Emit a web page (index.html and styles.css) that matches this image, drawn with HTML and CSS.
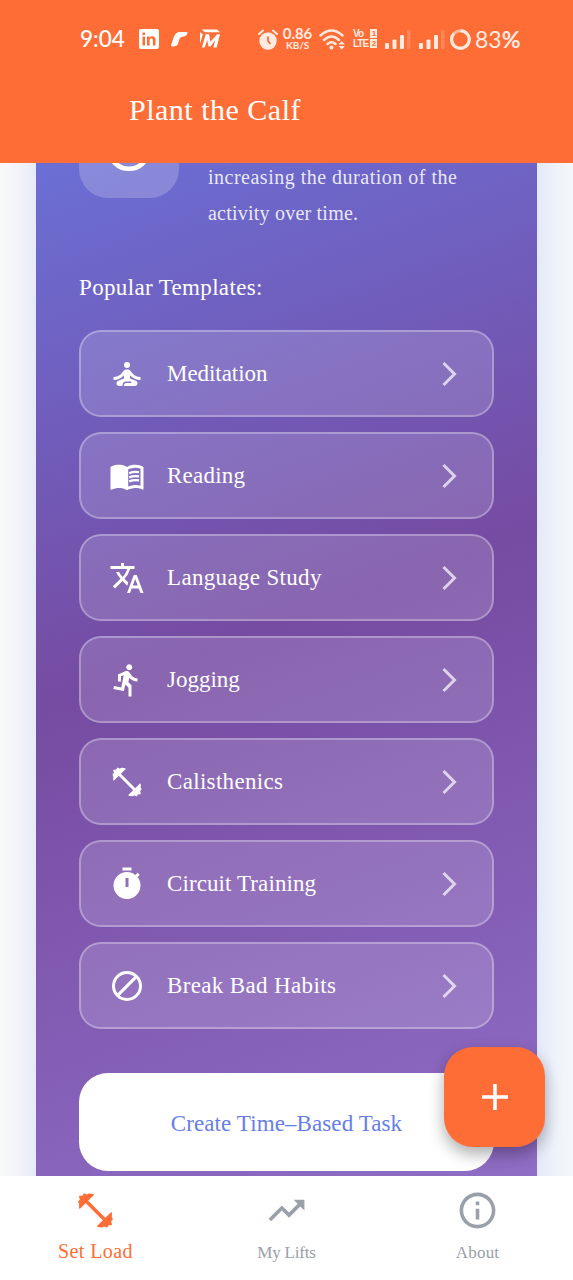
FILE: index.html
```html
<!DOCTYPE html>
<html lang="en">
<head>
<meta charset="utf-8">
<title>Plant the Calf</title>
<link rel="stylesheet" href="styles.css">
</head>
<body>
<div class="app">
  <header class="header">
    <div class="status">
      <span class="clock">9:04</span>
      <svg class="s-linkedin" width="20" height="20" viewBox="0 0 20 20"><path fill="#fff" fill-rule="evenodd" d="M2 0h16a2 2 0 0 1 2 2v16a2 2 0 0 1-2 2H2a2 2 0 0 1-2-2V2a2 2 0 0 1 2-2zm1.500 7.500v9h2.500v-9zm0-4v2.500h2.500v-2.500zm4.500 4v9h2.600v-5c0-2.600 3.300-2.600 3.300 0v5h2.600v-5.700c0-4-4-4.500-5.900-2.200V7.500z"/></svg>
      <svg class="s-wing" width="17" height="16" viewBox="0 0 17 16"><path fill="#fff" d="M0 14.500C2.500 8 3 1 9 1h7.500c0 3-2 4.500-5 4.700-3.500.3-3 3.300-4.500 7.300-1 2-3 2.500-6 2.500z"/></svg>
      <svg class="s-m" width="20" height="20" viewBox="0 0 21 20"><path fill="#fff" d="M0 3v12l3-10zM2 0h16l3 3H5zM6 5l-4 14h3l2.500-8 1.500 7h2l5-7-2 8h3.500L21 5h-3l-7 8-1.500-8z"/></svg>
      <svg class="s-alarm" width="20" height="21" viewBox="0 0 20 21"><circle cx="10" cy="12" r="8.700" fill="#ffeae0"/><path d="M1 5l4-3.500M19 5l-4-3.500" stroke="#ffeae0" stroke-width="2" stroke-linecap="round"/><path d="M10 7.500V12l2.500 3" stroke="#ff6d37" stroke-width="1.800" fill="none"/></svg>
      <span class="rate"><b>0.86</b><b class="unit">KB/S</b></span>
      <svg class="s-wifi" width="27" height="21" viewBox="0 0 27 21"><g fill="none" stroke="#ffeae0" stroke-width="2.500" stroke-linecap="round"><path d="M1.500 6.500Q12.500-3.500 23.500 6.500M5 11q7.500-7 15 0M8.500 15q4-3.500 8 0"/></g><circle cx="12.500" cy="18.500" r="2" fill="#ffeae0"/><path fill="#ffeae0" d="M19.500 15.500l3.200-3.500 3.200 3.500zm0 1.500h6.400l-3.200 3.500z"/></svg>
      <span class="volte"><b>Vo<i>1</i></b><b>LTE<i>2</i></b></span>
      <svg class="s-sig" width="26" height="19" viewBox="0 0 26 19"><g fill="#ffeae0"><rect y="13" width="4" height="6" rx="1"/><rect x="7.500" y="9.500" width="4" height="9.500" rx="1"/><rect x="15" y="5" width="4" height="14" rx="1"/><rect x="22" width="3.500" height="19" rx="1" opacity=".2"/></g></svg>
      <svg class="s-sig" width="26" height="19" viewBox="0 0 26 19"><g fill="#ffeae0"><rect y="13" width="4" height="6" rx="1"/><rect x="7.500" y="9.500" width="4" height="9.500" rx="1"/><rect x="15" y="5" width="4" height="14" rx="1"/><rect x="22" width="3.500" height="19" rx="1" opacity=".2"/></g></svg>
      <svg class="s-batt" width="21" height="21" viewBox="0 0 21 21"><circle cx="10.500" cy="10.500" r="8.800" fill="none" stroke="#ffb89a" stroke-width="3"/><path d="M10.500 1.700A8.800 8.800 0 1 1 4 4.500" fill="none" stroke="#ffeae0" stroke-width="3"/></svg>
      <span class="pct">83<b>%</b></span>
    </div>
    <h1 class="title">Plant the Calf</h1>
  </header>

  <main class="scroll">
    <section class="card">
      <div class="intro">
        <div class="tile"><svg width="48" height="48" viewBox="0 0 48 48"><circle cx="24" cy="25" r="19.800" fill="none" stroke="#fff" stroke-width="4.600"/></svg></div>
        <p class="desc"><span class="d1">increasing the duration of the</span><br><span class="d2">activity over time.</span></p>
      </div>
      <h2 class="sub">Popular Templates:</h2>
      <div class="list">
        <div class="item"><svg class="ico" viewBox="0 0 24 24"><circle cx="12" cy="6" r="2"/><path d="M21 16v-2c-2.240 0-4.160-.960-5.600-2.680l-1.340-1.600C13.680 9.260 13.120 9 12.530 9h-1.050c-.600 0-1.150.260-1.530.720l-1.340 1.600C7.160 13.040 5.240 14 3 14v2c2.770 0 5.190-1.170 7-3.250V15l-3.880 1.550C5.450 16.820 5 17.480 5 18.210 5 19.200 5.800 20 6.790 20H9v-.500c0-1.380 1.120-2.500 2.500-2.500h3c.280 0 .500.220.500.500s-.220.500-.500.500h-3c-.830 0-1.500.670-1.500 1.500v.500h7.210c.990 0 1.790-.800 1.790-1.790 0-.730-.450-1.390-1.120-1.660L14 15v-2.250c1.810 2.080 4.230 3.250 7 3.250z"/></svg><span class="label l1">Meditation</span><svg class="chev" viewBox="0 0 16 26"><path d="M2.500 2l11 11-11 11"/></svg></div>
        <div class="item"><svg class="ico" viewBox="0 0 24 24"><path d="M21 5c-1.110-.350-2.330-.500-3.500-.500-1.950 0-4.050.400-5.500 1.500-1.450-1.100-3.550-1.500-5.500-1.500S2.450 4.900 1 6v14.650c0 .250.250.500.500.500.100 0 .150-.050.250-.050C3.100 20.450 5.050 20 6.500 20c1.950 0 4.050.400 5.500 1.500 1.350-.850 3.800-1.500 5.500-1.500 1.650 0 3.350.300 4.750 1.050.100.050.150.050.250.050.250 0 .500-.250.500-.500V6c-.600-.450-1.250-.750-2-1zm0 13.500c-1.100-.350-2.300-.500-3.500-.500-1.700 0-4.150.650-5.500 1.500V8c1.350-.850 3.800-1.500 5.500-1.500 1.200 0 2.400.150 3.500.500v11.500z"/><path d="M12 7v12.500" fill="none" stroke="#fff" stroke-width="1.600"/><path d="M13.500 10.200q3-1.300 6.500-.700M13.500 12.900q3-1.300 6.500-.700M13.500 15.600q3-1.300 6.500-.700" fill="none" stroke="#fff" stroke-width="1.500"/></svg><span class="label l2">Reading</span><svg class="chev" viewBox="0 0 16 26"><path d="M2.500 2l11 11-11 11"/></svg></div>
        <div class="item"><svg class="ico" viewBox="0 0 24 24"><path d="M12.870 15.070l-2.540-2.510.030-.030c1.740-1.940 2.980-4.170 3.710-6.530H17V4h-7V2H8v2H1v1.990h11.170C11.500 7.920 10.440 9.750 9 11.350 8.070 10.320 7.300 9.190 6.690 8h-2c.730 1.630 1.730 3.170 2.980 4.560l-5.090 5.020L4 19l5-5 3.110 3.110.760-2.040zM18.500 10h-2L12 22h2l1.120-3h4.750L21 22h2l-4.500-12zm-2.620 7l1.620-4.330L19.120 17h-3.240z"/></svg><span class="label l3">Language Study</span><svg class="chev" viewBox="0 0 16 26"><path d="M2.500 2l11 11-11 11"/></svg></div>
        <div class="item"><svg class="ico" viewBox="0 0 24 24"><path d="M13.490 5.480c1.100 0 2-.900 2-2s-.900-2-2-2-2 .900-2 2 .900 2 2 2zm-3.600 13.900l1-4.400 2.100 2v6h2v-7.500l-2.100-2 .600-3c1.300 1.500 3.300 2.500 5.500 2.500v-2c-1.900 0-3.500-1-4.300-2.400l-1-1.600c-.400-.600-1-1-1.700-1-.300 0-.500.100-.800.100l-5.200 2.200v4.700h2v-3.400l1.800-.700-1.600 8.100-4.900-1-.400 2 7 1.400z"/></svg><span class="label l4">Jogging</span><svg class="chev" viewBox="0 0 16 26"><path d="M2.500 2l11 11-11 11"/></svg></div>
        <div class="item"><svg class="ico bell" viewBox="0 0 24 24"><path class="rod" d="M6 6l12 12"/><path class="plate" d="M3.200 10.600L10.700 3.200 8.500 2.900 7.200 3.600 5.700 2.800 5 4.100 3.200 4.200 3.700 6 2.700 7.200 3.300 8.400zM20.800 13.400L13.300 20.800 15.500 21.100 16.800 20.400 18.300 21.200 19 19.900 20.800 19.800 20.300 18 21.300 16.800 20.700 15.600z"/></svg><span class="label l5">Calisthenics</span><svg class="chev" viewBox="0 0 16 26"><path d="M2.500 2l11 11-11 11"/></svg></div>
        <div class="item"><svg class="ico" viewBox="0 0 24 24"><path d="M9 1h6v2H9zM19.030 7.390l1.420-1.420c-.430-.510-.900-.990-1.410-1.410l-1.420 1.420C16.070 4.740 14.120 4 12 4c-4.970 0-9 4.030-9 9s4.020 9 9 9 9-4.030 9-9c0-2.120-.740-4.070-1.970-5.610zM13 14h-2V8h2v6z"/></svg><span class="label l6">Circuit Training</span><svg class="chev" viewBox="0 0 16 26"><path d="M2.500 2l11 11-11 11"/></svg></div>
        <div class="item"><svg class="ico" viewBox="0 0 24 24"><path d="M5.600 18.400L18.400 5.600M21 12a9 9 0 1 1-18 0a9 9 0 1 1 18 0z" fill="none" stroke="#fff" stroke-width="2"/></svg><span class="label l7">Break Bad Habits</span><svg class="chev" viewBox="0 0 16 26"><path d="M2.500 2l11 11-11 11"/></svg></div>
      </div>
      <button class="create"><span class="cl">Create Time–Based Task</span></button>
    </section>
    <button class="fab" aria-label="Add"><svg width="26" height="26" viewBox="0 0 26 26"><path d="M13 0v26M0 13h26" stroke="#fff" stroke-width="3.600"/></svg></button>
  </main>

  <nav class="nav">
    <a class="tab active"><svg class="tico bell" viewBox="0 0 24 24"><path class="rod" d="M6 6l12 12"/><path class="plate" d="M3.200 10.600L10.700 3.200 8.500 2.900 7.200 3.600 5.700 2.800 5 4.100 3.200 4.200 3.700 6 2.700 7.200 3.300 8.400zM20.800 13.400L13.300 20.800 15.500 21.100 16.800 20.400 18.300 21.200 19 19.900 20.800 19.800 20.300 18 21.300 16.800 20.700 15.600z"/></svg><span class="t1">Set Load</span></a>
    <a class="tab"><svg class="tico" viewBox="0 0 24 24"><path d="M16 6l2.290 2.290-4.880 4.880-4-4L2 16.590 3.410 18l6-6 4 4 6.300-6.290L22 12V6z"/></svg><span class="t2">My Lifts</span></a>
    <a class="tab"><svg class="tico" viewBox="0 0 24 24"><path d="M11 7h2v2h-2zm0 4h2v6h-2zm1-9C6.480 2 2 6.480 2 12s4.480 10 10 10 10-4.480 10-10S17.520 2 12 2zm0 18c-4.410 0-8-3.590-8-8s3.590-8 8-8 8 3.590 8 8-3.590 8-8 8z"/></svg><span class="t3">About</span></a>
  </nav>
</div>
</body>
</html>
```

FILE: styles.css
```css
* { box-sizing: border-box; }
body { margin: 0; font-family: "Liberation Serif", serif; }
svg { display: block; flex: none; }
.app { width: 573px; height: 1280px; display: flex; flex-direction: column; overflow: hidden; background: #fff; }

.header { height: 163px; flex: none; background: #ff6d37; color: #fff; }
.status { height: 78px; display: flex; align-items: center; padding-left: 80px; font-family: Lato, sans-serif; }
.clock { width: 59px; font-size: 22.5px; font-weight: 500; line-height: 24px; }
.s-wing { margin-left: 12px; }
.s-m { margin-left: 12px; }
.s-alarm { margin-left: 38px; }
.rate { width: 35px; margin-left: 2px; display: flex; flex-direction: column; align-items: center; font-size: 15px; line-height: 13px; color: #ffeae0; letter-spacing: -.1px; }
.rate .unit { font-size: 10px; line-height: 11px; }
.s-wifi { margin-left: 4px; }
.volte { width: 24px; margin-left: 7px; display: flex; flex-direction: column; font: 700 10px/10px "Liberation Sans", sans-serif; color: #ffeae0; letter-spacing: -1px; }
.volte b { display: flex; justify-content: space-between; }
.volte i { width: 7px; height: 9px; background: #ffeae0; color: #ff6d37; font: 700 8px/9px "Liberation Sans", sans-serif; text-align: center; }
.s-sig { margin-left: 8px; }
.s-batt { margin-left: 5px; }
.pct { margin-left: 4px; font-size: 23px; color: #ffeae0; line-height: 24px; }
.title { margin: 17px 0 0 129px; font-size: 30px; line-height: 30px; font-weight: 400; letter-spacing: .5px; white-space: nowrap; }

.scroll { height: 1013px; flex: none; position: relative; overflow: hidden; padding: 0 36px; background: linear-gradient(90deg, #fafafa, #f5f8fb); }
.card { height: 1392px; margin-top: -239px; padding: 174px 43px 0; background: linear-gradient(160.200deg, #667eea 0%, #764ba2 50%, #9575cd 100%); box-shadow: 0 14px 40px rgba(102, 126, 234, .24); }
.intro { display: flex; gap: 29px; height: 134px; }
.tile { width: 100px; height: 100px; flex: none; border-radius: 29px; background: rgba(255, 255, 255, .2); display: flex; align-items: center; justify-content: center; }
.desc { margin: 62px 0 0; font-size: 20px; line-height: 35.500px; color: rgba(255, 255, 255, .87); white-space: nowrap; }
.d1 { letter-spacing: .5px; }
.d2 { letter-spacing: .22px; }
.sub { margin: 41px 0 27px; font-size: 23px; line-height: 30px; font-weight: 400; letter-spacing: .35px; color: #fff; white-space: nowrap; }
.list { display: flex; flex-direction: column; gap: 15px; }
.item { height: 87px; display: flex; align-items: center; padding: 0 34px 0 28px; border: 2px solid rgba(255, 255, 255, .3); border-radius: 22px; background: rgba(255, 255, 255, .15); }
.ico { width: 36px; height: 36px; fill: #fff; stroke: none; }
.label { margin: 1px 0 0 22px; flex: 1; font-size: 23px; line-height: 30px; color: #fff; white-space: nowrap; }
.l1 { letter-spacing: -.05px; }
.l2 { letter-spacing: .22px; }
.l3 { letter-spacing: .33px; }
.l4 { letter-spacing: 0; }
.l5 { letter-spacing: .32px; }
.l6 { letter-spacing: .1px; }
.l7 { letter-spacing: .36px; }
.chev { width: 16px; height: 26px; margin-right: 1px; fill: none; stroke: rgba(255, 255, 255, .7); stroke-width: 3; }
.create { display: flex; align-items: center; justify-content: center; width: 415px; height: 98px; margin-top: 44px; padding: 3px 0 0; border: 0; border-radius: 29px; background: #fff; color: #667eea; font: 23px/30px "Liberation Serif", serif; letter-spacing: .1px; white-space: nowrap; }
.fab { position: absolute; left: 444px; top: 884px; width: 101px; height: 100px; padding: 0; border: 0; border-radius: 29px; background: #ff6d37; box-shadow: 0 7px 16px rgba(0, 0, 0, .32); display: flex; align-items: center; justify-content: center; }

.nav { height: 104px; flex: none; display: grid; grid-template-columns: repeat(3, 1fr); background: #fff; }
.tab { display: flex; flex-direction: column; align-items: center; padding-top: 13px; color: #9aa0aa; font-size: 17px; line-height: 22px; }
.tico { width: 43px; height: 43px; fill: #9aa0aa; }
.tab span { margin-top: 10px; }
.t2 { letter-spacing: -.2px; }
.t3 { letter-spacing: .2px; }
.tab.active { color: #ff6d37; font-size: 20px; }
.tab.active span { margin-top: 8px; letter-spacing: .4px; }
.rod { fill: none; stroke: #fff; stroke-width: 2; }
.plate { stroke: #fff; stroke-width: .8; stroke-linejoin: round; }
.active .bell { fill: #ff6d37; }
.active .rod, .active .plate { stroke: #ff6d37; }
```
